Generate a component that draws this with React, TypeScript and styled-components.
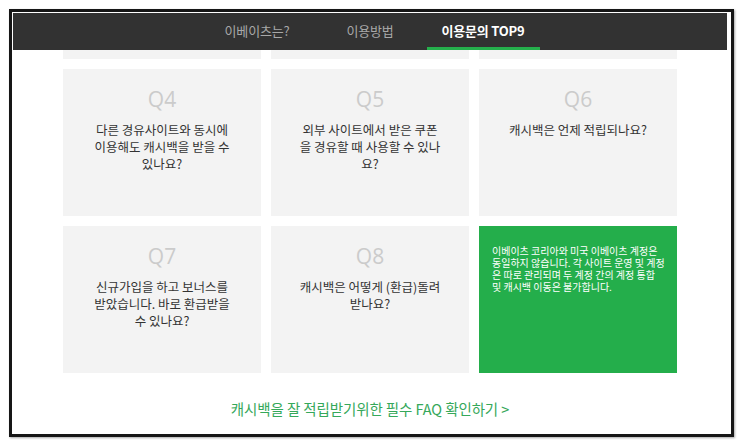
import React from "react";
import styled, { createGlobalStyle } from "styled-components";

const Global = createGlobalStyle`
  html, body { margin: 0; padding: 0; background: #ffffff; }
  body { font-family: "Noto Sans CJK KR", "Noto Sans", sans-serif; }
  * { box-sizing: border-box; }
`;

const Page = styled.div`
  width: 743px;
  height: 447px;
  padding: 9px 0 0 9px;
  background: #ffffff;
`;

const Frame = styled.div`
  width: 725px;
  height: 428px;
  border: 3px solid #161616;
  box-shadow: 1px 1px 2px rgba(0, 0, 0, 0.35);
  padding: 1px 4px 0 1px;
  background: #ffffff;
  display: flex;
  flex-direction: column;
`;

const NavBar = styled.nav`
  height: 37px;
  flex: none;
  background: #323232;
  display: flex;
  justify-content: center;
`;

const Tab = styled.div<{ $active?: boolean }>`
  width: 113px;
  display: flex;
  align-items: center;
  justify-content: center;
  font-size: 13px;
  padding-top: 1px;
  color: ${(p) => (p.$active ? "#ffffff" : "#a8a8a8")};
  font-weight: ${(p) => (p.$active ? 700 : 400)};
  border-bottom: 3px solid ${(p) => (p.$active ? "#25b04c" : "transparent")};
  letter-spacing: -0.2px;
`;

const Viewport = styled.div`
  flex: 1;
  overflow: hidden;
  display: flex;
  flex-direction: column;
  align-items: center;
`;

const Grid = styled.div`
  margin-top: -138px;
  display: grid;
  grid-template-columns: repeat(3, 198px);
  grid-auto-rows: 147px;
  gap: 10px;
`;

const Card = styled.div`
  background: #f3f3f3;
  display: flex;
  flex-direction: column;
  align-items: center;
  padding: 18px 26px 0;
`;

const QLabel = styled.div`
  font-family: "Open Sans", "Noto Sans", sans-serif;
  font-size: 21px;
  line-height: 25px;
  color: #cbcbcb;
  font-weight: 400;
`;

const Question = styled.div`
  margin-top: 9px;
  width: 146px;
  text-align: center;
  font-size: 12.5px;
  line-height: 17px;
  color: #333333;
  word-break: break-all;
`;

const AnswerCard = styled.div`
  background: #24ae4b;
  color: #ffffff;
  padding: 19px 11px 0 13px;
  font-size: 10px;
  line-height: 11.9px;
  word-break: break-all;
`;

const MoreLink = styled.a`
  margin-top: 25px;
  font-size: 14.5px;
  color: #35a85a;
  text-decoration: none;
  letter-spacing: -0.1px;
`;

const items = [
  { q: "Q4", text: "다른 경유사이트와 동시에 이용해도 캐시백을 받을 수 있나요?" },
  { q: "Q5", text: "외부 사이트에서 받은 쿠폰을 경유할 때 사용할 수 있나요?" },
  { q: "Q6", text: "캐시백은 언제 적립되나요?" },
  { q: "Q7", text: "신규가입을 하고 보너스를 받았습니다. 바로 환급받을 수 있나요?" },
  { q: "Q8", text: "캐시백은 어떻게 (환급)돌려 받나요?" },
];

export default function App() {
  return (
    <>
      <Global />
      <Page>
        <Frame>
          <NavBar>
            <Tab>이베이츠는?</Tab>
            <Tab>이용방법</Tab>
            <Tab $active>이용문의 TOP9</Tab>
          </NavBar>
          <Viewport>
            <Grid>
              <Card />
              <Card />
              <Card />
              {items.map((it) => (
                <Card key={it.q}>
                  <QLabel>{it.q}</QLabel>
                  <Question>{it.text}</Question>
                </Card>
              ))}
              <AnswerCard>
                이베이츠 코리아와 미국 이베이츠 계정은 동일하지 않습니다. 각 사이트 운영 및 계정은 따로 관리되며 두 계정 간의 계정 통합 및 캐시백 이동은 불가합니다.
              </AnswerCard>
            </Grid>
            <MoreLink href="#">캐시백을 잘 적립받기위한 필수 FAQ 확인하기 &gt;</MoreLink>
          </Viewport>
        </Frame>
      </Page>
    </>
  );
}
